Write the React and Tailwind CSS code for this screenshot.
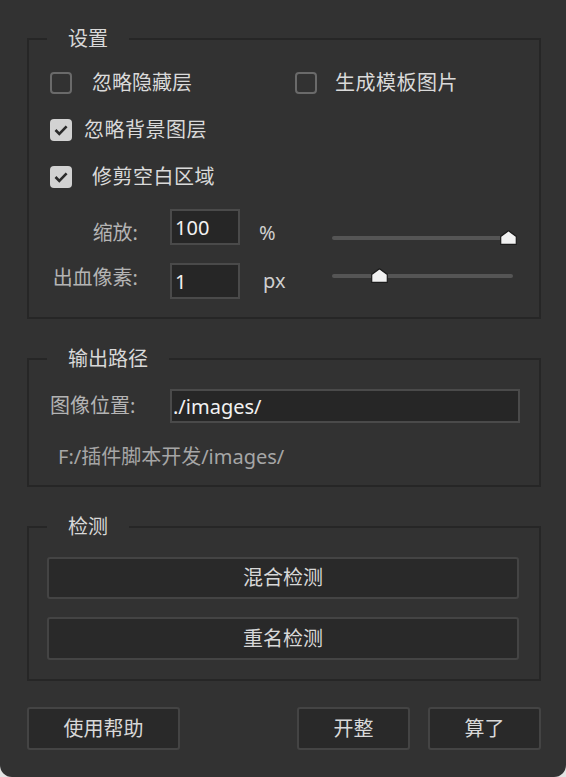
import { useState } from "react";

function CheckBox({ checked }) {
  return (
    <span
      className={`flex h-[22px] w-[22px] shrink-0 items-center justify-center rounded-[4px] ${
        checked ? "bg-[#d2d2d2]" : "border-2 border-[#6a6a6a]"
      }`}
    >
      {checked && (
        <svg width="22" height="22" viewBox="0 0 22 22">
          <path d="M5.5 11 L9.3 14.8 L16.6 7.4" fill="none" stroke="#2b2b2b" strokeWidth="2.6" />
        </svg>
      )}
    </span>
  );
}

function CheckItem({ label, checked, gap, onClick, className = "" }) {
  return (
    <div className={`flex items-center cursor-pointer ${className}`} onClick={onClick}>
      <CheckBox checked={checked} />
      <span className={`${gap} text-[#dadada]`}>{label}</span>
    </div>
  );
}

function Slider({ value }) {
  return (
    <div className="relative h-[4px] w-[181px] rounded-full bg-[#555555]">
      {/* thumb */}
      <svg
        width="17"
        height="15"
        viewBox="0 0 17 15"
        className="absolute top-[-6px]"
        style={{ left: `calc(${value}% - 8px)` }}
      >
        <path d="M8.5 0.7 L16.3 6.4 L16.3 14.3 L0.7 14.3 L0.7 6.4 Z" fill="#f1f1f1" stroke="#1c1c1c" strokeWidth="1.2" />
      </svg>
    </div>
  );
}

function Group({ title, children, className = "" }) {
  return (
    <fieldset className={`ml-[27px] w-[514px] border-2 border-[#262626] ${className}`}>
      <legend className="ml-[18px] px-[21px] text-[20px] leading-[26px] text-[#d8d8d8]">{title}</legend>
      {children}
    </fieldset>
  );
}

function Btn({ children, className = "" }) {
  return (
    <button
      className={`flex items-center justify-center rounded-[3px] border-2 border-[#444444] bg-[#292929] text-[20px] text-[#d8d8d8] ${className}`}
    >
      {children}
    </button>
  );
}

export default function App() {
  const [opts, setOpts] = useState({ hidden: false, template: false, bg: true, trim: true });
  const toggle = (k) => setOpts((p) => ({ ...p, [k]: !p[k] }));

  return (
    <div className="min-h-screen bg-[#e4e4e4] font-['Noto_Sans','Noto_Sans_CJK_SC',sans-serif]">
      <div className="flex h-[777px] w-[566px] flex-col rounded-b-[12px] bg-[#323232] pt-[26px]">
        {/* 设置 */}
        <Group title="设置" className="pb-[18px]">
          <div className="flex flex-col pl-[21px] pt-[7px] text-[20px] leading-[26px]">
            <div className="flex h-[47px] items-center">
              <CheckItem
                label="忽略隐藏层"
                checked={opts.hidden}
                gap="ml-[20px]"
                className="w-[245px]"
                onClick={() => toggle("hidden")}
              />
              <CheckItem
                label="生成模板图片"
                checked={opts.template}
                gap="ml-[18px] tracking-[0.5px]"
                onClick={() => toggle("template")}
              />
            </div>
            <div className="flex h-[47px] items-center">
              <CheckItem label="忽略背景图层" checked={opts.bg} gap="ml-[12px] tracking-[0.5px]" onClick={() => toggle("bg")} />
            </div>
            <div className="flex h-[47px] items-center">
              <CheckItem label="修剪空白区域" checked={opts.trim} gap="ml-[20px] tracking-[0.5px]" onClick={() => toggle("trim")} />
            </div>

            <div className="mt-[9px] flex h-[36px] items-center">
              <span className="w-[88px] pt-[12px] text-right text-[#b4b4b4]">缩放:</span>
              <input
                defaultValue="100"
                className="ml-[32px] h-[36px] w-[70px] border-2 border-[#4a4a4a] bg-[#262626] px-[3px] text-[20px] text-[#f2f2f2] outline-none"
              />
              <span className="w-[92px] pl-[19px] pt-[12px] text-[#cfcfcf]">%</span>
              <div className="pt-[22px]">
                <Slider value={97} />
              </div>
            </div>

            <div className="mt-[18px] flex h-[36px] items-center">
              <span className="w-[88px] pb-[6px] text-right text-[#b4b4b4]">出血像素:</span>
              <input
                defaultValue="1"
                className="ml-[32px] h-[36px] w-[70px] border-2 border-[#4a4a4a] bg-[#262626] px-[3px] text-[20px] text-[#f2f2f2] outline-none"
              />
              <span className="w-[92px] pl-[23px] text-[#cfcfcf]">px</span>
              <div className="pb-[10px]">
                <Slider value={26} />
              </div>
            </div>
          </div>
        </Group>

        {/* 输出路径 */}
        <Group title="输出路径" className="mt-[27px] pb-[15px]">
          <div className="flex flex-col text-[20px] leading-[26px]">
            <div className="mt-[17px] flex h-[34px] items-center pl-[21px]">
              <span className="w-[120px] text-[#b4b4b4]">图像位置:</span>
              <input
                defaultValue="./images/"
                className="h-[34px] w-[350px] border-2 border-[#4a4a4a] bg-[#262626] px-[1px] text-[20px] text-[#f2f2f2] outline-none"
              />
            </div>
            <div className="mt-[21px] pl-[29px] text-[#a6a6a6]">F:/插件脚本开发/images/</div>
          </div>
        </Group>

        {/* 检测 */}
        <Group title="检测" className="mt-[27px] pb-[19px]">
          <div className="flex flex-col gap-[18px] pl-[18px] pr-[20px] pt-[17px]">
            <Btn className="h-[42px] w-full">混合检测</Btn>
            <Btn className="h-[43px] w-full">重名检测</Btn>
          </div>
        </Group>

        <div className="ml-[27px] mt-[26px] flex w-[514px]">
          <Btn className="h-[43px] w-[153px]">使用帮助</Btn>
          <Btn className="ml-auto h-[43px] w-[113px]">开整</Btn>
          <Btn className="ml-[18px] h-[43px] w-[113px]">算了</Btn>
        </div>
      </div>
    </div>
  );
}
